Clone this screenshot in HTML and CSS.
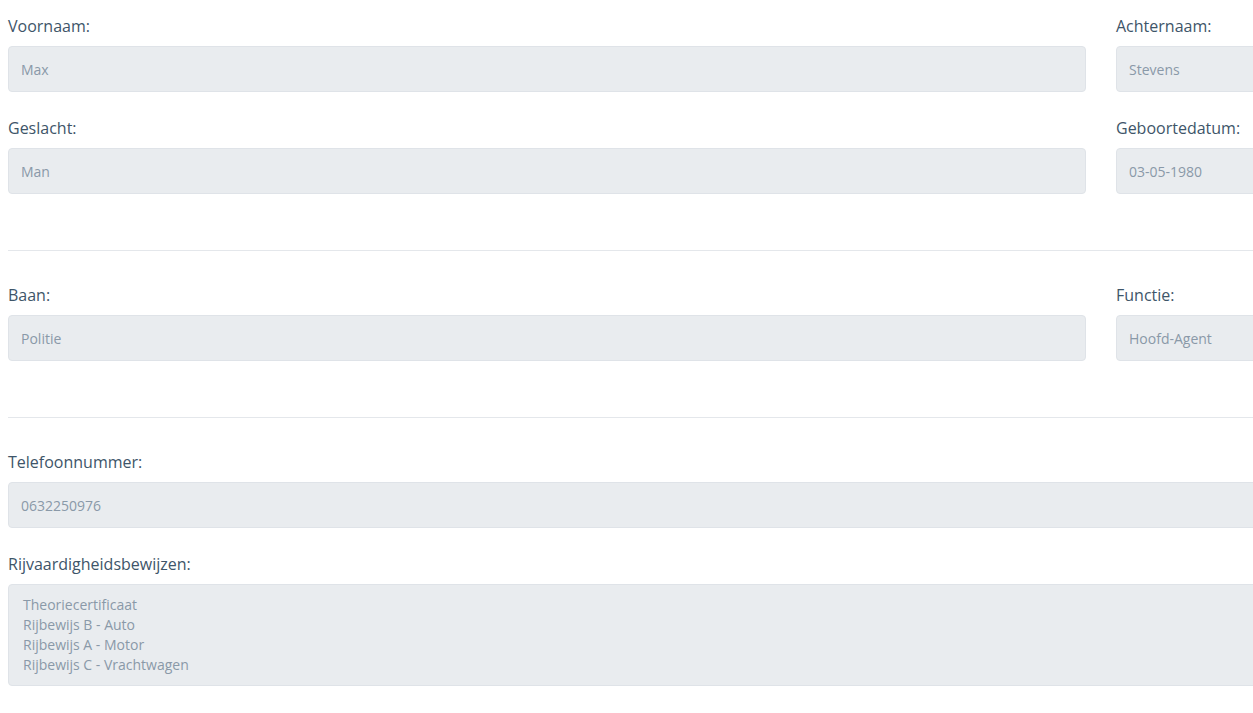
FILE: index.html
```html
<!DOCTYPE html>
<html lang="nl">
<head>
<meta charset="utf-8">
<title>Profiel</title>
<link rel="stylesheet" href="styles.css">
</head>
<body>
<div class="viewport">
  <form class="form">
    <div class="row">
      <div class="group">
        <label class="label" for="voornaam">Voornaam:</label>
        <input class="field" id="voornaam" type="text" value="Max" readonly>
      </div>
      <div class="group">
        <label class="label" for="achternaam">Achternaam:</label>
        <input class="field" id="achternaam" type="text" value="Stevens" readonly>
      </div>
    </div>
    <div class="row">
      <div class="group">
        <label class="label" for="geslacht">Geslacht:</label>
        <input class="field" id="geslacht" type="text" value="Man" readonly>
      </div>
      <div class="group">
        <label class="label" for="geboortedatum">Geboortedatum:</label>
        <input class="field" id="geboortedatum" type="text" value="03-05-1980" readonly>
      </div>
    </div>
    <hr class="divider">
    <div class="row">
      <div class="group">
        <label class="label" for="baan">Baan:</label>
        <input class="field" id="baan" type="text" value="Politie" readonly>
      </div>
      <div class="group">
        <label class="label" for="functie">Functie:</label>
        <input class="field" id="functie" type="text" value="Hoofd-Agent" readonly>
      </div>
    </div>
    <hr class="divider">
    <div class="group">
      <label class="label" for="telefoon">Telefoonnummer:</label>
      <input class="field" id="telefoon" type="text" value="0632250976" readonly>
    </div>
    <div class="group">
      <label class="label" for="rijbewijzen">Rijvaardigheidsbewijzen:</label>
      <textarea class="field area" id="rijbewijzen" readonly>Theoriecertificaat
Rijbewijs B - Auto
Rijbewijs A - Motor
Rijbewijs C - Vrachtwagen</textarea>
    </div>
  </form>
</div>
</body>
</html>
```
FILE: styles.css
```css
html, body {
  margin: 0;
  padding: 0;
  background: #ffffff;
  overflow: hidden;
}

body {
  font-family: "Open Sans", "Liberation Sans", sans-serif;
  color: #3e5569;
}

.viewport {
  width: 100%;
  overflow: hidden;
  padding: 14px 0 0 8px;
  box-sizing: border-box;
}

.form {
  width: 2186px;
  margin: 0;
}

.row {
  display: grid;
  grid-template-columns: 1fr 1fr;
  column-gap: 30px;
}

.group {
  margin-bottom: 24px;
}

.label {
  display: block;
  font-size: 16px;
  line-height: 24px;
  margin-bottom: 8px;
  color: #3e5569;
}

.field {
  display: block;
  width: 100%;
  box-sizing: border-box;
  height: 46px;
  margin: 0;
  padding: 0 12px;
  border: 1px solid #dfe3e8;
  border-radius: 4px;
  background: #e9ecef;
  color: #8a99a8;
  font-family: "Open Sans", "Liberation Sans", sans-serif;
  font-size: 14px;
  line-height: 20px;
  outline: none;
}

.area {
  height: 102px;
  padding: 10px 14px;
  resize: none;
  overflow: hidden;
}

.divider {
  margin: 32px 0;
  border: 0;
  border-top: 1px solid #e4e7eb;
  height: 0;
}
```
